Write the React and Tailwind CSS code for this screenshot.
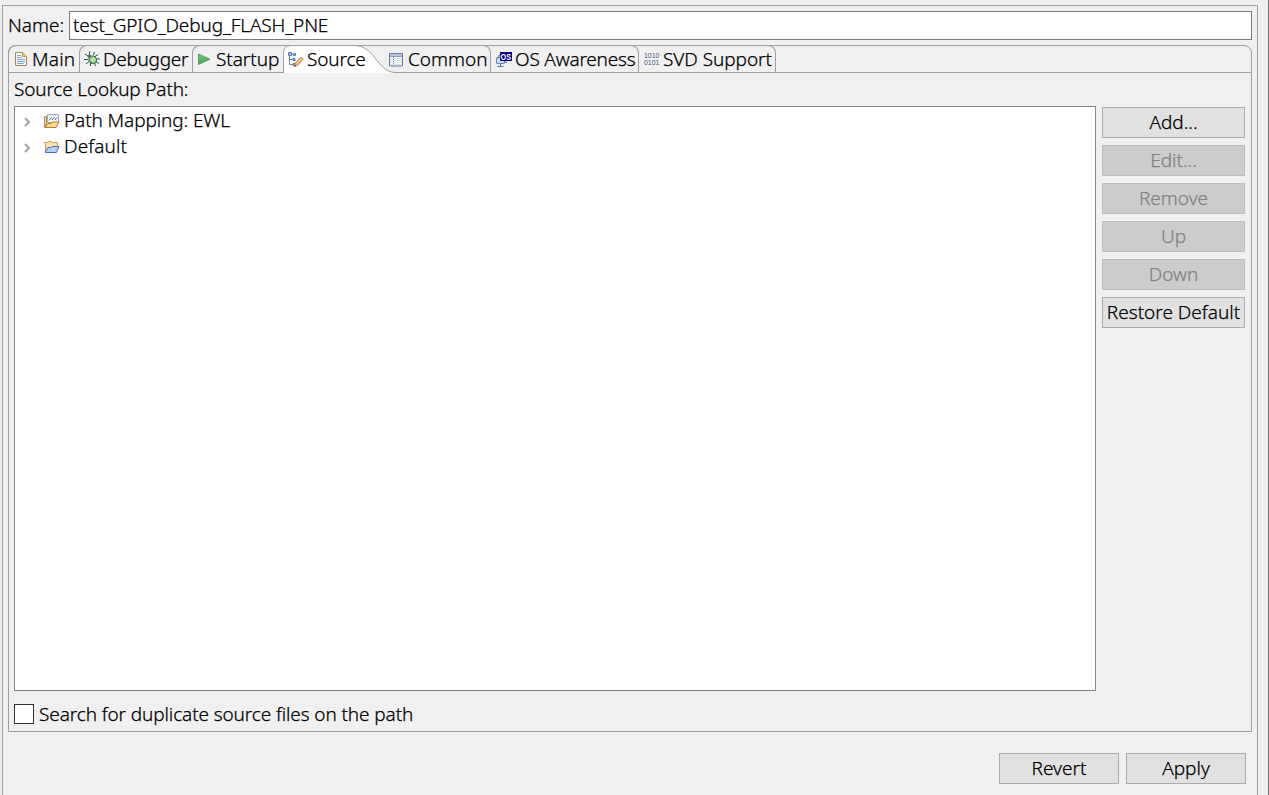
function PageIcon() {
  return (
    <svg width="12" height="16" viewBox="0 0 12 16" className="shrink-0">
      <path d="M.5 1.5h7l4 4v9H.5z" fill="#f4f7fd" stroke="#a48a4c" />
      <path d="M7.5 1.5v4h4z" fill="#e8c878" stroke="#c39a45" />
      <path d="M2 4.500h4M2 6.500h5M2 8.500h8M2 10.500h8M2 12.500h7" stroke="#8aa3ce" />
    </svg>
  );
}

function BugIcon() {
  return (
    <svg width="16" height="16" viewBox="0 0 16 16" className="shrink-0">
      <path d="M5.500 .5v3M10.500 1 9.500 4M1 3l3.500 2.500M0 8.500h4.500M2 13l3-2.500M6.500 15V12M11.500 15 10.500 12.500M11 5.500l3-2M12.500 8h3.500M12 10.500l3 2" fill="none" stroke="#28594e" />
      <ellipse cx="8.800" cy="8.800" rx="4" ry="3.600" transform="rotate(35 8.800 8.800)" fill="#98c983" stroke="#2f6b5c" />
      <circle cx="5.300" cy="5.300" r="1.700" fill="#3a7568" />
      <path d="M7.200 8l3 2.800M9 6.800l2.200 2" stroke="#e0f2c0" strokeWidth="1.200" />
    </svg>
  );
}

function PlayIcon() {
  return (
    <svg width="14" height="14" viewBox="0 0 14 14" className="shrink-0">
      <defs>
        <linearGradient id="play" x1="0" y1="0" x2="0" y2="1">
          <stop offset="0" stopColor="#7cc98a" />
          <stop offset="1" stopColor="#3a9f55" />
        </linearGradient>
      </defs>
      <path d="M1.500 2v10.500L13 7.200z" fill="url(#play)" stroke="#4a9f63" strokeWidth=".9" strokeLinejoin="round" />
    </svg>
  );
}

function SourceIcon() {
  return (
    <svg width="16" height="17" viewBox="0 0 16 17" className="shrink-0">
      <path d="M1.500 5v8.500H6M1.500 8.500H5M4 3.500h3" fill="none" stroke="#6a86b8" />
      <path d="M.5 1.500h3v3h-3zM5.500 2.500h2v2h-2zM5 7.500h2v2H5zM5 12.500h2v2H5z" fill="#a9c0e6" stroke="#587ab5" />
      <path d="M6.500 15.500 7.500 12l5.500-6 2.300 2-5.600 6.300z" fill="#f0b775" stroke="#c98542" strokeWidth=".9" />
      <path d="M8.500 12.800 14 6.900" stroke="#fbdcae" />
      <path d="M6.200 15.800l.7-2 1.300 1.300z" fill="#5c4632" />
    </svg>
  );
}

function TableIcon() {
  return (
    <svg width="15" height="14" viewBox="0 0 15 14" className="shrink-0">
      <path d="M.5.5h13v12.500H.5z" fill="#f7fafd" stroke="#6b7a9b" />
      <path d="M1 1h12v2H1z" fill="#b9c6dd" />
      <path d="M1 3.500h12M4.500 3.500v9" stroke="#8c9dbd" />
      <path d="M1 5.500h12M1 7.500h12M1 9.500h12M1 11.500h12" stroke="#d8e0ec" />
    </svg>
  );
}

function OsIcon() {
  return (
    <svg width="16" height="17" viewBox="0 0 16 17" className="shrink-0 overflow-visible">
      <path d="M2.500 4.500h7v6h-7z" fill="#c4daf0" stroke="#6a92bf" />
      <path d="M.7 6.700h7.600v5.600H.7z" fill="#d6e7f7" stroke="#4b78b0" />
      <path d="M4.500 12.500v2.500M1.500 15.500h6M9 11.500h2" stroke="#4b78b0" strokeWidth="1.200" />
      <path d="M4 1h12v9H4z" fill="#000080" />
      <text x="4.500" y="8.800" fontFamily="Liberation Sans" fontWeight="700" fontSize="9" textLength="10.500" lengthAdjust="spacingAndGlyphs" fill="#fff">OS</text>
    </svg>
  );
}

function BinaryIcon() {
  return (
    <svg width="16" height="16" viewBox="0 0 16 16" className="shrink-0 overflow-visible">
      <g fontFamily="Liberation Sans" fontSize="7.500" fill="#46588a">
        <text x="0" y="7" textLength="15.500" lengthAdjust="spacingAndGlyphs">1010</text>
        <text x="0" y="13.500" textLength="15.500" lengthAdjust="spacingAndGlyphs">0101</text>
      </g>
    </svg>
  );
}

function MappingIcon() {
  return (
    <svg width="17" height="16" viewBox="0 0 17 16" className="shrink-0">
      <path d="M1.500 14V3.500h2V11z" fill="#f7dfa4" stroke="#b98b3e" />
      <path d="M4.500 1.500h11v8h-11z" fill="#f6fafd" stroke="#9aaabb" />
      <path d="M6 7.500 8.500 4.500M9 7 11.500 4M12 7l2-2.500" stroke="#345f94" />
      <path d="M1.700 14.500 5 10.500h3l1-1.500h7L13 14.500z" fill="#fcd890" stroke="#b5792b" />
    </svg>
  );
}

function FolderIcon() {
  return (
    <svg width="17" height="14" viewBox="0 0 17 14" className="shrink-0">
      <path d="M2.500 11.500V4L.8 2.500h4l1-1h3l1 1h4.700V6" fill="#fbe3ab" stroke="#c79b50" />
      <path d="M2.200 12.500 5 7.500h3l1-1h7l-2.500 6z" fill="#b5cef4" stroke="#4a70b8" />
    </svg>
  );
}

function Chevron() {
  return (
    <svg width="7" height="10" viewBox="0 0 7 10" className="shrink-0">
      <path d="M1 1l4 4-4 4" fill="none" stroke="#a3a3a3" strokeWidth="2" />
    </svg>
  );
}

function TreeItem({ icon, children }) {
  return (
    <div className="flex h-[26px] items-center pl-[9px]">
      <span className="pt-[3px]"><Chevron /></span>
      <span className="ml-[12px] flex w-[17px] pt-[2px]">{icon}</span>
      <span className="ml-[4px] leading-[26px]">{children}</span>
    </div>
  );
}

function Button({ children, disabled, className = "w-[143px]" }) {
  const tone = disabled
    ? "border-[#bfbfbf] bg-[#cccccc] text-[#838383]"
    : "border-[#adadad] bg-[#e1e1e1] text-black";
  return (
    <button disabled={disabled} className={`flex h-[31px] shrink-0 items-center justify-center border whitespace-nowrap ${tone} ${className}`}>
      {children}
    </button>
  );
}

const leftTab = "flex h-[28px] shrink-0 items-center border-t border-b border-l border-[#a0a0a0] rounded-tl-[8px]";
const rightTab = "flex h-[28px] shrink-0 items-center border-t border-b border-r border-[#a0a0a0] rounded-tr-[8px]";

export default function App() {
  return (
    <div className="flex h-[795px] w-[1269px] overflow-hidden border-r border-[#6e6e6e] bg-[#f0f0f0] pt-[5px] pl-[2px] font-['Noto_Sans',sans-serif] text-[19px] font-light whitespace-nowrap text-black [-webkit-text-stroke:0.25px]">
      <div className="flex w-[1256px] flex-col border-x border-t border-[#a0a0a0] pt-[5px] pl-[5px]">
        <div className="flex h-[29px] items-center">
          <span className="w-[61px]">Name:</span>
          <div className="flex h-[29px] w-[1183px] items-center border border-[#7a7a7a] bg-white pl-[3px] tracking-[-0.12px]">test_GPIO_Debug_FLASH_PNE</div>
        </div>

        <div className="mt-[5px] flex h-[687px] w-[1244px] flex-col rounded-t-[8px] border border-[#a0a0a0]">
          <div className="-mx-px -mt-px flex h-[28px]">
            <div className={`${leftTab} w-[71px] pl-[6px]`}>
              <PageIcon />
              <span className="ml-[5px] tracking-[0.2px]">Main</span>
            </div>
            <div className={`${leftTab} w-[113px] pl-[4px]`}>
              <BugIcon />
              <span className="ml-[3px] tracking-[-0.27px]">Debugger</span>
            </div>
            <div className={`${leftTab} w-[91px] pl-[4px]`}>
              <PlayIcon />
              <span className="ml-[5px] tracking-[-0.05px]">Startup</span>
            </div>
            <div className="relative flex h-[28px] w-[105px] shrink-0 items-center pl-[5px]">
              <svg width="113" height="28" viewBox="0 0 113 28" className="absolute top-0 left-0">
                <path d="M1 28V7L7 1H74C84 2 88 9 94 16C99 22 104 27 113 28z" fill="#fff" />
                <path d="M.5 28V8C.5 3 3 .5 8 .5H71C83 .5 88 8 94 15.500C100 23 105 27.500 113 27.500" fill="none" stroke="#a0a0a0" />
              </svg>
              <span className="relative flex items-center">
                <SourceIcon />
                <span className="ml-[3px] tracking-[-0.15px]">Source</span>
              </span>
            </div>
            <div className="flex h-[28px] w-[103px] shrink-0 items-center rounded-tr-[8px] border-t border-r border-[#a0a0a0] bg-[linear-gradient(#a0a0a0,#a0a0a0)] bg-[length:95px_1px] bg-[position:right_bottom] bg-no-repeat pl-[1px]">
              <TableIcon />
              <span className="ml-[4px]">Common</span>
            </div>
            <div className={`${rightTab} w-[148px] pl-[5px]`}>
              <OsIcon />
              <span className="ml-[3px] tracking-[-0.2px]">OS Awareness</span>
            </div>
            <div className={`${rightTab} w-[137px] pl-[5px]`}>
              <BinaryIcon />
              <span className="ml-[3px] tracking-[-0.05px]">SVD Support</span>
            </div>
            <div className="mr-px flex-1 border-b border-[#a0a0a0]" />
          </div>

          <div className="ml-[5px] h-[33px] pt-[2px] leading-[28px] tracking-[-0.17px]">Source Lookup Path:</div>

          <div className="ml-[5px] flex h-[585px]">
            <div className="w-[1082px] border border-[#828790] bg-white">
              <TreeItem icon={<MappingIcon />}>
                <span className="tracking-[-0.1px]">Path Mapping: EWL</span>
              </TreeItem>
              <TreeItem icon={<FolderIcon />}>
                <span className="tracking-[0.12px]">Default</span>
              </TreeItem>
            </div>
            <div className="ml-[6px] flex flex-col gap-[7px] pt-px">
              <Button>Add...</Button>
              <Button disabled>Edit...</Button>
              <Button disabled>Remove</Button>
              <Button disabled>Up</Button>
              <Button disabled>Down</Button>
              <Button>Restore Default</Button>
            </div>
          </div>

          <label className="mt-[10px] ml-[5px] flex h-[26px] items-center">
            <span className="h-[20px] w-[20px] border border-[#333333] bg-white" />
            <span className="ml-[5px] tracking-[-0.11px]">Search for duplicate source files on the path</span>
          </label>
        </div>

        <div className="mt-[21px] flex justify-end gap-[7px] pr-[11px]">
          <Button className="w-[120px]">Revert</Button>
          <Button className="w-[120px]">Apply</Button>
        </div>
      </div>
    </div>
  );
}
